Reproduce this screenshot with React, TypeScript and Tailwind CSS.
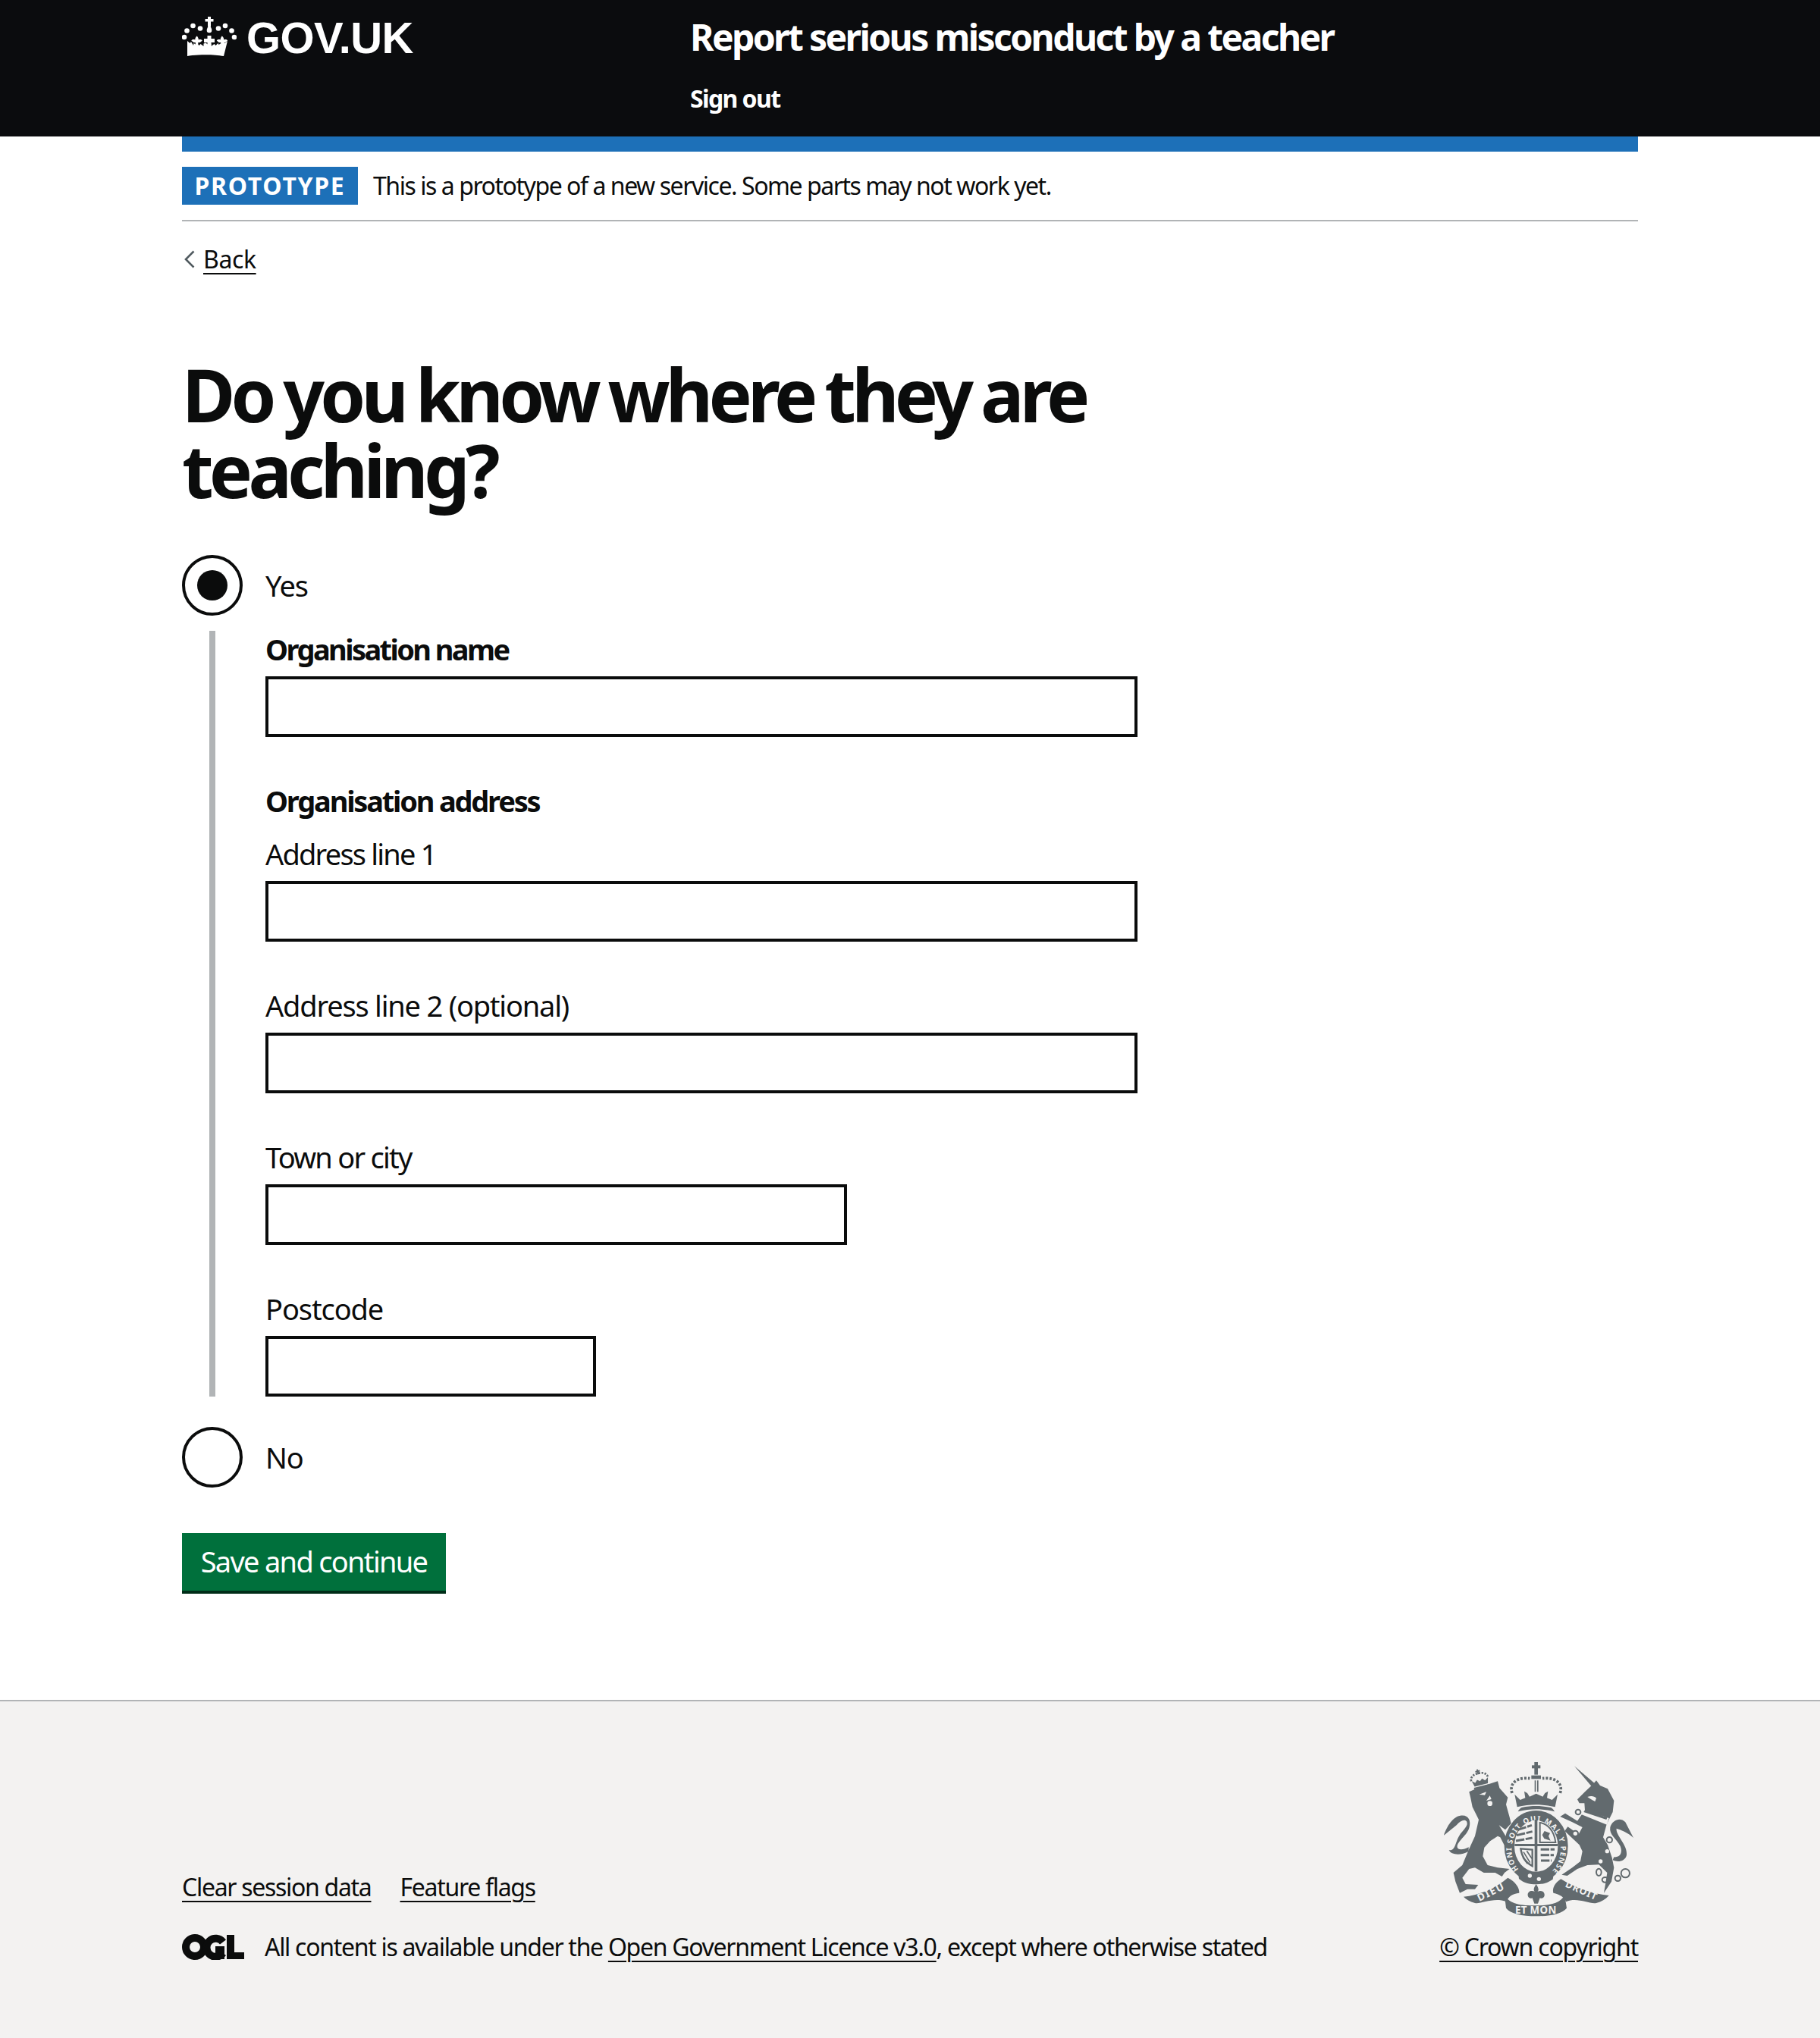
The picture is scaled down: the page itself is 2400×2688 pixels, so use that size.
import React from "react";

const Crown = () => (
  <svg viewBox="0 0 72 54" className="w-[72px] h-[54px] shrink-0" fill="#fff">
    <rect x="34" y="1" width="4" height="13" />
    <rect x="30.500" y="4" width="11" height="3.500" />
    <path d="M36 12c2.500 3 3.300 5 3.300 7a3.300 3.300 0 0 1-6.600 0c0-2 .8-4 3.300-7z" />
    <circle cx="14.500" cy="13" r="3.300" /><circle cx="24" cy="16.500" r="3.300" /><circle cx="48" cy="16.500" r="3.300" /><circle cx="57" cy="13" r="3.300" />
    <circle cx="6.500" cy="19.500" r="3.300" /><circle cx="65.500" cy="19.500" r="3.300" />
    <circle cx="3" cy="28" r="3.300" /><circle cx="69" cy="28" r="3.300" />
    <path d="M7 33l3.500 3 1.500-2 3 5 .5-3 3 2 1-2 3 3 2-2 4 3 0-3.500 3-1 2 2 2-2 3 1 0 3.500 4-3 2 2 3-3 1 2 3-2 .5 3 3-5 1.500 2 3.500-3-5 20c-7-1.200-14-1.800-24-1.800s-17 .6-24 1.800z" />
    <path d="M19.500 26c1.500 2 2.300 3.500 2.300 5.500 2-.8 3.700-.3 5 1l-3 2.500h-2.500v5.500h-3.500v-5.500h-2.500l-3-2.500c1.300-1.300 3-1.800 5-1 0-2 .5-3.500 2.700-5.500zM52.500 26c2.200 2 2.700 3.500 2.700 5.500 2-.8 3.700-.3 5 1l-3 2.500h-2.500v5.500h-3.500v-5.500h-2.500l-3-2.500c1.300-1.300 3-1.800 5-1 0-2 .8-3.500 2.300-5.500z" />
    <path d="M33.500 26h5v4h4.500v5h-4.500v5.500h-5v-5.500h-4.500v-5h4.500z" />
  </svg>
);

const Ogl = () => (
  <svg viewBox="0 0 82 34" className="w-[82px] h-[34px] shrink-0" fill="none" stroke="#0b0c0c">
    <circle cx="17" cy="17" r="12" strokeWidth="10" />
    <path d="M54 10.500A12 12 0 1 0 54 25" strokeWidth="10" />
    <rect x="44" y="16" width="12" height="17" fill="#0b0c0c" stroke="none" />
    <rect x="59" y="1" width="10" height="32" fill="#0b0c0c" stroke="none" />
    <rect x="59" y="24" width="23" height="9" fill="#0b0c0c" stroke="none" />
  </svg>
);

const C = "#626a6e";
const BG = "#f3f2f1";
const crestFont = "'Noto Sans',sans-serif";

const Crest = () => (
  <svg viewBox="120 60 780 630" className="w-[260px] h-[210px] block" fill={C}>
    <defs>
      <path id="garter" d="M428 497A97 112 0 1 1 566 497" />
    </defs>
    {/* lion crown */}
    <g transform="rotate(-14 272 135)">
      <rect x="269" y="100" width="6" height="20" /><rect x="263" y="105" width="18" height="6" />
      <path d="M238 140c0-18 18-24 34-24s34 6 34 24" fill="none" stroke={C} strokeWidth="8" strokeDasharray="7 5" />
      <path d="M240 140l12 10 10-10 10 8 10-8 10 10 14-10-6 24h-54z" />
      <rect x="242" y="168" width="60" height="7" />
    </g>
    {/* lion */}
    <path d="M232 190L272 172L345 148L352 175L385 212L378 240L392 290L398 315L375 340L350 322L395 395L408 420L385 428L355 370L345 365L315 385L292 410L286 445L305 480L345 490L392 495L372 510L362 525L335 510L290 510L255 490L232 495L205 530L218 555L268 558L255 575L225 575L195 590L178 545L170 510L205 480L230 420L255 365L270 300L245 250L238 215Z" />
    <circle cx="314" cy="236" r="10" fill={BG} />
    <path d="M272 200l28-10-6 13zM300 225l14-20 6 14z" fill={BG} />
    {/* lion tail */}
    <path d="M230 425c-30 18-70 15-78-5 25 6 25-30 40-55 15-25 40-40 30-58-6-10-25-5-40 15l-50 40c8-25 30-72 65-78 35-5 42 22 36 45-8 35-50 55-48 80 1 12 25 12 45 0z" />
    {/* garter */}
    <ellipse cx="497" cy="405" rx="106" ry="121" fill="none" stroke={C} strokeWidth="40" />
    <text fontFamily={crestFont} fontWeight="700" fontSize="29" fill={BG}>
      <textPath href="#garter" textLength="505">HONI SOIT QUI MAL Y PENSE</textPath>
    </text>
    {/* shield */}
    <rect x="491" y="300" width="11" height="205" />
    <rect x="412" y="396" width="170" height="9" />
    <g fill="none" stroke={C} strokeWidth="9" strokeDasharray="34 5">
      <path d="M425 340l55-18M420 362l62-15M417 384l65-12" />
      <path d="M515 418h55M515 440h52M516 462h42" />
    </g>
    <path d="M512 312c30 5 56 30 62 78h-62z" fill="none" stroke={C} strokeWidth="6" />
    <path d="M530 345l22 8-6 12 8 18-25-8-8-14z" />
    <path d="M436 415l46 4v65c-28-15-42-38-46-69z" fill={BG} stroke={C} strokeWidth="7" />
    <path d="M447 428l26 42M460 424l20 30M445 450l18 25" stroke={C} strokeWidth="5" />
    <path d="M425 498c25 30 50 42 72 42s50-12 72-42l-6 38c-20 14-40 20-66 20-25 0-50-6-68-22z" />
    <circle cx="472" cy="522" r="8" fill={BG} /><circle cx="508" cy="535" r="8" fill={BG} />
    {/* royal crown */}
    <rect x="490" y="72" width="14" height="50" /><rect x="480" y="85" width="34" height="12" />
    <path d="M478 125h38v14h-38z" />
    <path d="M491 145h5v45h-5zM501 145h5v45h-5z" />
    <path d="M402 195c-12-35 15-65 70-58M592 195c12-35-15-65-70-58" fill="none" stroke={C} strokeWidth="11" strokeDasharray="9 6" />
    <path d="M412 200l22 22 20-8-4-26 12 7 9 14 26-12 26 12 9-14 12-7-4 26 20 8 22-22-10 50c-50-12-100-12-150 0z" />
    <path d="M425 268c5-10 10-14 15-16 40-8 75-8 115 0 5 2 10 6 15 16-50-12-95-12-145 0z" />
    {/* unicorn */}
    <path d="M648 88L728 156L716 168Z" />
    <path d="M660 220L690 190L722 160L735 145L750 165L780 178L805 225L800 270L785 300L775 322L762 370L780 400L797 450L805 490L795 545L765 590L772 550L778 510L745 478L700 480L660 495L620 522L598 518L640 490L672 465L680 425L668 400L610 345L622 328L665 358L680 330L640 310L592 288L612 275L660 305L690 262L688 235L668 235Z" />
    <path d="M680 258l105 36-8 26-100-40z" fill={BG} />
    <path d="M690 262l5-12 8 8 6-10 6 12 10-8 4 14 10-6 4 14 10-4 4 14 22 6-4 10-90-30z" />
    <path d="M735 215c-8-8-20-10-35-5 8 6 18 12 30 18z" fill={BG} />
    <path d="M790 330C800 300 830 290 850 310L882 372C860 350 830 340 815 335C810 360 860 400 855 440C850 465 820 470 800 460L805 448C830 450 840 430 830 405C815 375 785 360 790 330Z" />
    <circle cx="663" cy="270" r="10" fill="none" stroke={C} strokeWidth="6" />
    <circle cx="652" cy="355" r="11" fill={BG} stroke={C} strokeWidth="6" />
    <circle cx="787" cy="380" r="11" fill={BG} stroke={C} strokeWidth="6" />
    <ellipse cx="745" cy="508" rx="10" ry="14" fill="none" stroke={C} strokeWidth="6" />
    <ellipse cx="770" cy="538" rx="12" ry="10" fill="none" stroke={C} strokeWidth="6" />
    <circle cx="820" cy="532" r="11" fill="none" stroke={C} strokeWidth="6" />
    <circle cx="850" cy="512" r="17" fill="none" stroke={C} strokeWidth="6" />
    <circle cx="778" cy="425" r="8" fill={BG} /><circle cx="752" cy="465" r="8" fill={BG} />
    {/* ribbons */}
    <path d="M210 605C270 600 340 570 385 530C415 545 432 570 430 590C405 592 385 605 380 625C330 605 280 635 255 630C235 625 220 615 210 605Z" />
    <path d="M785 600C725 595 650 570 595 535C572 550 560 570 565 590C590 595 610 608 615 625C660 605 705 635 735 630C755 625 772 615 785 600Z" />
    <path d="M372 600C395 635 435 640 497 640C555 640 590 630 610 600L618 650C600 672 555 682 497 682C440 682 395 672 378 650Z" />
    <path d="M497 555c10 15 12 25 5 30 15-8 30 0 28 15-2 10-10 14-18 10l-8 22h-14l-8-22c-8 4-16 0-18-10-2-15 13-23 28-15-7-5-5-15 5-30z" />
    <text x="272" y="624" fontFamily={crestFont} fontWeight="700" fontSize="40" fill={BG} transform="rotate(-26 272 624)" letterSpacing="5">DIEU</text>
    <text x="414" y="672" fontFamily={crestFont} fontWeight="700" fontSize="40" fill={BG} letterSpacing="1">ET MON</text>
    <text x="610" y="565" fontFamily={crestFont} fontWeight="700" fontSize="38" fill={BG} transform="rotate(24 610 565)" letterSpacing="3">DROIT</text>
  </svg>
);

const Label = ({ children, t }: { children: React.ReactNode; t: string }) => (
  <div className={`text-[38px] leading-[48px] mb-[12px] ${t}`}>{children}</div>
);
const Input = ({ w }: { w: string }) => <div className={`h-[80px] border-4 border-[#0b0c0c] bg-white ${w}`} />;

const Radio = ({ checked, label }: { checked?: boolean; label: string }) => (
  <div className="flex items-center h-[80px]">
    <div className="w-[80px] h-[80px] rounded-full border-4 border-[#0b0c0c] flex items-center justify-center shrink-0">
      {checked && <div className="w-[40px] h-[40px] rounded-full bg-[#0b0c0c]" />}
    </div>
    <span className="ml-[30px] text-[38px] leading-[50px] tracking-[-1.2px]">{label}</span>
  </div>
);

const U = ({ children }: { children: React.ReactNode }) => (
  <span className="underline decoration-2 underline-offset-[6px]">{children}</span>
);

export default function App() {
  return (
    <div className="min-h-[2688px] flex flex-col bg-white text-[#0b0c0c] font-['Noto_Sans',sans-serif]">
      <header className="bg-[#0b0c0e] h-[180px] text-white">
        <div className="w-[1920px] mx-auto flex">
          <div className="w-[670px] flex items-start pt-[21px]">
            <Crown />
            <span className="ml-[13px] mt-[-4px] font-['Liberation_Sans',sans-serif] font-bold text-[58px] leading-[66px] tracking-[-0.6px]">GOV.UK</span>
          </div>
          <div>
            <div className="mt-[17px] text-[48px] leading-[64px] font-bold tracking-[-2.6px]">Report serious misconduct by a teacher</div>
            <div className="mt-[29px] text-[32px] leading-[40px] font-bold tracking-[-1.6px]">Sign out</div>
          </div>
        </div>
      </header>

      <div className="w-[1920px] mx-auto">
        <div className="h-[20px] bg-[#1d70b8]" />
        <div className="pt-[20px] pb-[20px] border-b-2 border-[#b1b4b6] flex items-center">
          <span className="h-[50px] w-[232px] bg-[#1d70b8] text-white text-[32px] leading-[50px] font-bold tracking-[1.7px] text-center">PROTOTYPE</span>
          <span className="ml-[20px] text-[32px] leading-[50px] tracking-[-1.45px]">This is a prototype of a new service. Some parts may not work yet.</span>
        </div>

        <a className="mt-[30px] flex items-center h-[40px] text-[32px] leading-[40px] tracking-[-0.4px]">
          <svg viewBox="0 0 14 24" className="w-[14px] h-[24px] ml-[3px] mr-[11px]" fill="none" stroke="#505a5f" strokeWidth="2.600">
            <path d="M12.500 1.500L2 12l10.500 10.500" />
          </svg>
          <U>Back</U>
        </a>

        <h1 className="mt-[108px] mb-[62px] w-[1270px] text-[96px] leading-[100px] font-bold tracking-[-5.8px] [word-spacing:-4.5px]">
          Do you know where they are teaching?
        </h1>

        <Radio checked label="Yes" />
        <div className="mt-[20px] ml-[36px] pl-[66px] border-l-8 border-[#b1b4b6] w-[1260px]">
          <Label t="font-bold tracking-[-2.6px]">Organisation name</Label>
          <Input w="w-[1150px]" />
          <div className="mt-[60px] mb-[20px] text-[38px] leading-[48px] pb-[2px] font-bold tracking-[-2.2px]">Organisation address</div>
          <Label t="tracking-[-1.8px]">Address line 1</Label>
          <Input w="w-[1150px]" />
          <div className="h-[60px]" />
          <Label t="tracking-[-1.2px]">Address line 2 (optional)</Label>
          <Input w="w-[1150px]" />
          <div className="h-[60px]" />
          <Label t="tracking-[-1.75px]">Town or city</Label>
          <Input w="w-[767px]" />
          <div className="h-[60px]" />
          <Label t="tracking-[-1.1px]">Postcode</Label>
          <Input w="w-[436px]" />
        </div>
        <div className="mt-[40px]">
          <Radio label="No" />
        </div>
        <button className="mt-[60px] block w-[348px] h-[80px] bg-[#00703c] border-b-4 border-[#002d18] text-white text-[38px] leading-[50px] tracking-[-1.7px] text-center pb-[2px]">
          Save and continue
        </button>
      </div>

      <footer className="mt-[140px] flex-1 bg-[#f3f2f1] border-t-2 border-[#b1b4b6]">
        <div className="w-[1920px] mx-auto flex justify-between items-end pt-[76px]">
          <div className="text-[32px] leading-[40px] tracking-[-1.3px]">
            <div className="flex gap-[38px]">
              <U>Clear session data</U>
              <U>Feature flags</U>
            </div>
            <div className="flex items-center mt-[39px]">
              <Ogl />
              <span className="ml-[27px]">
                All content is available under the <U>Open Government Licence v3.0</U>, except where otherwise stated
              </span>
            </div>
          </div>
          <div className="flex flex-col items-end text-[32px] leading-[40px] tracking-[-1.2px]">
            <Crest />
            <div className="mt-[18px]"><U>© Crown copyright</U></div>
          </div>
        </div>
      </footer>
    </div>
  );
}
